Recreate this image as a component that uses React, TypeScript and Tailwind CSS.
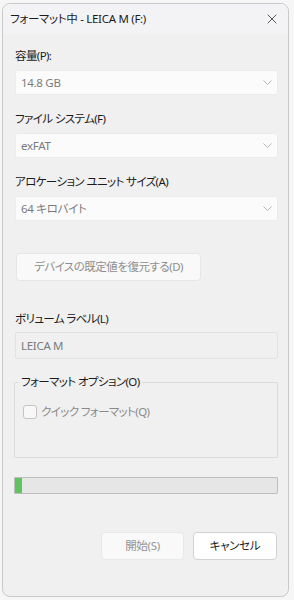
import { X } from 'lucide-react'

const font = "font-['Noto_Sans','Noto_Sans_CJK_JP',sans-serif] [font-feature-settings:'palt'] tracking-[-0.3px]"

function Chevron() {
  return (
    <svg width="9" height="5" viewBox="0 0 9 5" className="shrink-0">
      <path d="M0.5 0.5 L4.5 4.5 L8.5 0.5" fill="none" stroke="#b4b4b4" strokeWidth="1" />
    </svg>
  )
}

function Select({ value }: { value: string }) {
  return (
    <div className="ml-[1px] mt-[6px] flex h-[25px] items-center justify-between rounded-[3px] border border-[#ececec] bg-[#fbfbfb] pl-[5px] pr-[5px]">
      <span className="text-[11.5px] leading-[16px] text-[#7b7b7b]">{value}</span>
      <Chevron />
    </div>
  )
}

// kana-heavy labels are set a bit tighter, closer to the narrow UI font of the original
function Label({ text, mt }: { text: string; mt: string }) {
  return <div className={`${mt} ml-[1px] h-[16px] text-[11.5px] leading-[16px] tracking-[-0.6px] text-[#1b1b1b]`}>{text}</div>
}

export default function App() {
  return (
    <div className={`h-[600px] w-[294px] overflow-hidden bg-[#f6f6f6] pl-[2px] pt-[3px] ${font}`}>
      <div className="flex h-[594px] w-[287px] flex-col overflow-hidden rounded-[8px] border border-[#c9c9c9] bg-[#f0f0f0]">
        <div className="flex h-[30px] shrink-0 items-center justify-between bg-[#f3f3f6] pl-[7px] pr-[8px]">
          <span className="text-[11.5px] leading-[16px] text-[#1b1b1b]">フォーマット中 - LEICA M (F:)</span>
          <X size={16} strokeWidth={1.1} className="text-[#1b1b1b]" />
        </div>

        <div className="flex flex-col pl-[11px] pr-[10px]">
          <Label text="容量(P):" mt="mt-[14px]" />
          <Select value="14.8 GB" />

          <Label text="ファイル システム(F)" mt="mt-[16px]" />
          <Select value="exFAT" />

          <Label text="アロケーション ユニット サイズ(A)" mt="mt-[16px]" />
          <Select value="64 キロバイト" />

          <button className="ml-[2px] mt-[32px] flex h-[28px] w-[185px] items-center justify-center rounded-[4px] border border-[#e6e6e6] bg-[#f9f9f9] text-[11.5px] tracking-[-0.5px] text-[#8e8e8e]">
            デバイスの既定値を復元する(D)
          </button>

          <Label text="ボリューム ラベル(L)" mt="mt-[30px]" />
          <div className="ml-[1px] mt-[5px] flex h-[27px] items-center rounded-[2px] border border-[#e2e2e2] bg-[#f0f0f0] pl-[5px] text-[11.5px] text-[#7b7b7b]">
            LEICA M
          </div>

          <div className="relative mt-[23px] h-[76px] rounded-[2px] border border-[#dcdcdc]">
            <span className="absolute -top-[9px] left-[4px] bg-[#f0f0f0] px-[2px] text-[11.5px] leading-[16px] tracking-[-0.6px] text-[#1b1b1b]">
              フォーマット オプション(O)
            </span>
            <div className="ml-[8px] mt-[21px] flex items-center gap-[4px]">
              <div className="h-[14px] w-[14px] rounded-[3px] border border-[#c4c4c4] bg-[#f8f8f8]" />
              <span className="text-[11.5px] leading-[16px] tracking-[-0.6px] text-[#8a8a8a]">クイック フォーマット(Q)</span>
            </div>
          </div>

          <div className="mt-[19px] h-[17px] rounded-[1px] border border-[#bdbdbd] bg-[#e6e6e6]">
            <div className="h-full w-[7px] bg-[#5fc35f]" />
          </div>

          <div className="mt-[38px] flex justify-end gap-[9px] pr-[1px]">
            <button className="flex h-[28px] w-[83px] items-center justify-center rounded-[4px] border border-[#e8e8e8] bg-[#f9f9f9] text-[11.5px] text-[#959595]">
              開始(S)
            </button>
            <button className="flex h-[28px] w-[84px] items-center justify-center rounded-[4px] border border-[#d2d2d2] bg-white text-[11.5px] text-[#1b1b1b]">
              キャンセル
            </button>
          </div>
        </div>
      </div>
    </div>
  )
}
